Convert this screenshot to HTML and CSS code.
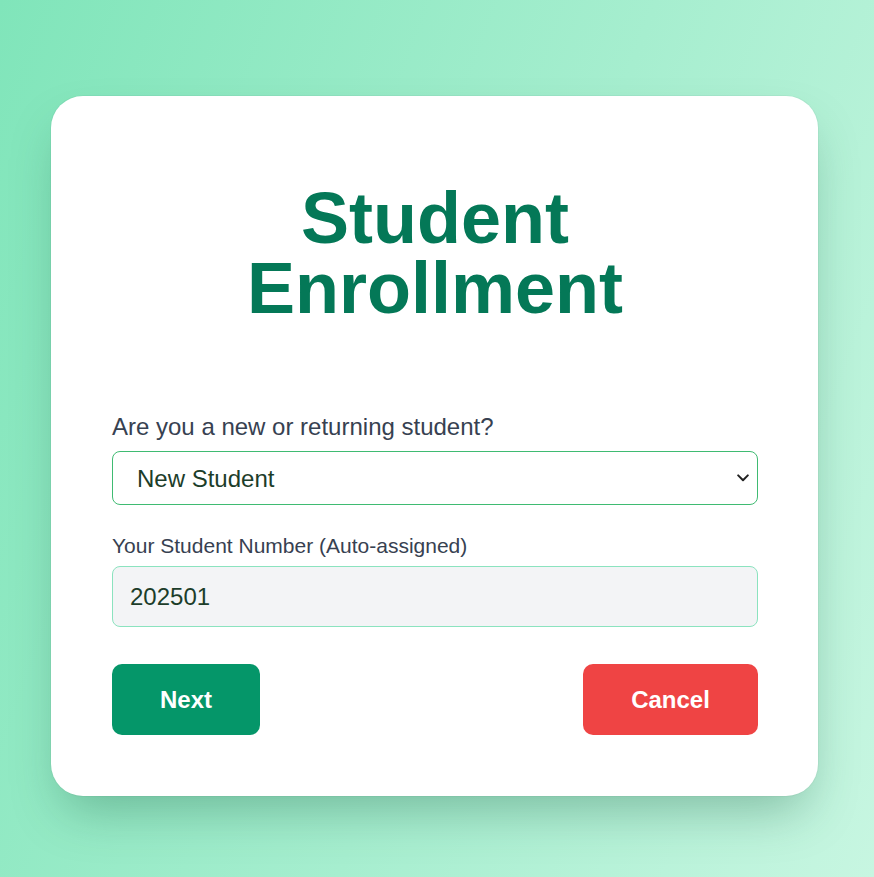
FILE: index.html
```html
<!DOCTYPE html>
<html lang="en">
<head>
<meta charset="utf-8">
<title>Student Enrollment</title>
<link rel="stylesheet" href="styles.css">
</head>
<body>
<div class="page">
  <main class="card">
    <h1 class="title">Student Enrollment</h1>
    <form class="form">
      <label class="label label-lg" for="type">Are you a new or returning student?</label>
      <select id="type" class="select">
        <option>New Student</option>
        <option>Returning Student</option>
      </select>
      <label class="label label-sm" for="num">Your Student Number (Auto-assigned)</label>
      <input id="num" class="input" type="text" value="202501" readonly>
      <div class="actions">
        <button type="button" class="btn btn-next">Next</button>
        <button type="button" class="btn btn-cancel">Cancel</button>
      </div>
    </form>
  </main>
</div>
</body>
</html>
```

FILE: styles.css
```css
* { box-sizing: border-box; }
html, body { margin: 0; padding: 0; }
body {
  min-height: 877px;
  background: linear-gradient(110deg, #80e5ba 0%, #a6eecf 55%, #c7f6e1 100%);
  font-family: "Liberation Sans", Arial, sans-serif;
}
.page {
  padding: 96px 56px 81px 51px;
}
.card {
  width: 767px;
  height: 700px;
  background: #ffffff;
  border-radius: 32px;
  padding: 60px 60px 60px 61px;
  box-shadow: 0 25px 50px -12px rgba(20, 90, 60, 0.35), 0 0 0 1px rgba(0, 0, 0, 0.03);
}
.title {
  margin: 27px 0 86px;
  text-align: center;
  font-size: 72px;
  line-height: 70px;
  font-weight: 700;
  color: #047857;
}
.form { display: flex; flex-direction: column; }
.label {
  display: block;
  color: #374151;
  line-height: 1.5;
}
.label-lg { font-size: 24px; line-height: 36px; margin-bottom: 6px; }
.label-sm { font-size: 21px; line-height: 31px; margin-top: 25px; margin-bottom: 5px; }
.select {
  -webkit-appearance: none;
  appearance: none;
  height: 54px;
  width: 100%;
  border: 1px solid #3fbb72;
  border-radius: 8px;
  background-color: #ffffff;
  background-image: url("data:image/svg+xml;utf8,<svg xmlns='http://www.w3.org/2000/svg' width='12' height='8' viewBox='0 0 12 8'><path d='M1.2 1.4 L6 6.2 L10.8 1.4' fill='none' stroke='%23222' stroke-width='2' stroke-linecap='round' stroke-linejoin='round'/></svg>");
  background-repeat: no-repeat;
  background-position: right 8px center;
  background-size: 12px 8px;
  padding: 0 32px 0 24px;
  font-family: "Liberation Sans", Arial, sans-serif;
  font-size: 24px;
  color: #1c3d2a;
  outline: none;
}
.input {
  height: 61px;
  width: 100%;
  border: 1px solid #8be3bf;
  border-radius: 8px;
  background: #f3f4f6;
  padding: 0 17px;
  font-family: "Liberation Sans", Arial, sans-serif;
  font-size: 24px;
  color: #1c3d2a;
  outline: none;
}
.actions {
  display: flex;
  justify-content: space-between;
  margin-top: 37px;
}
.btn {
  height: 71px;
  padding: 0 48px;
  border: none;
  border-radius: 10px;
  font-family: "Liberation Sans", Arial, sans-serif;
  font-size: 24px;
  font-weight: 700;
  color: #ffffff;
  cursor: pointer;
}
.btn-next { background: #059669; width: 148px; }
.btn-cancel { background: #ef4444; width: 175px; }
```
